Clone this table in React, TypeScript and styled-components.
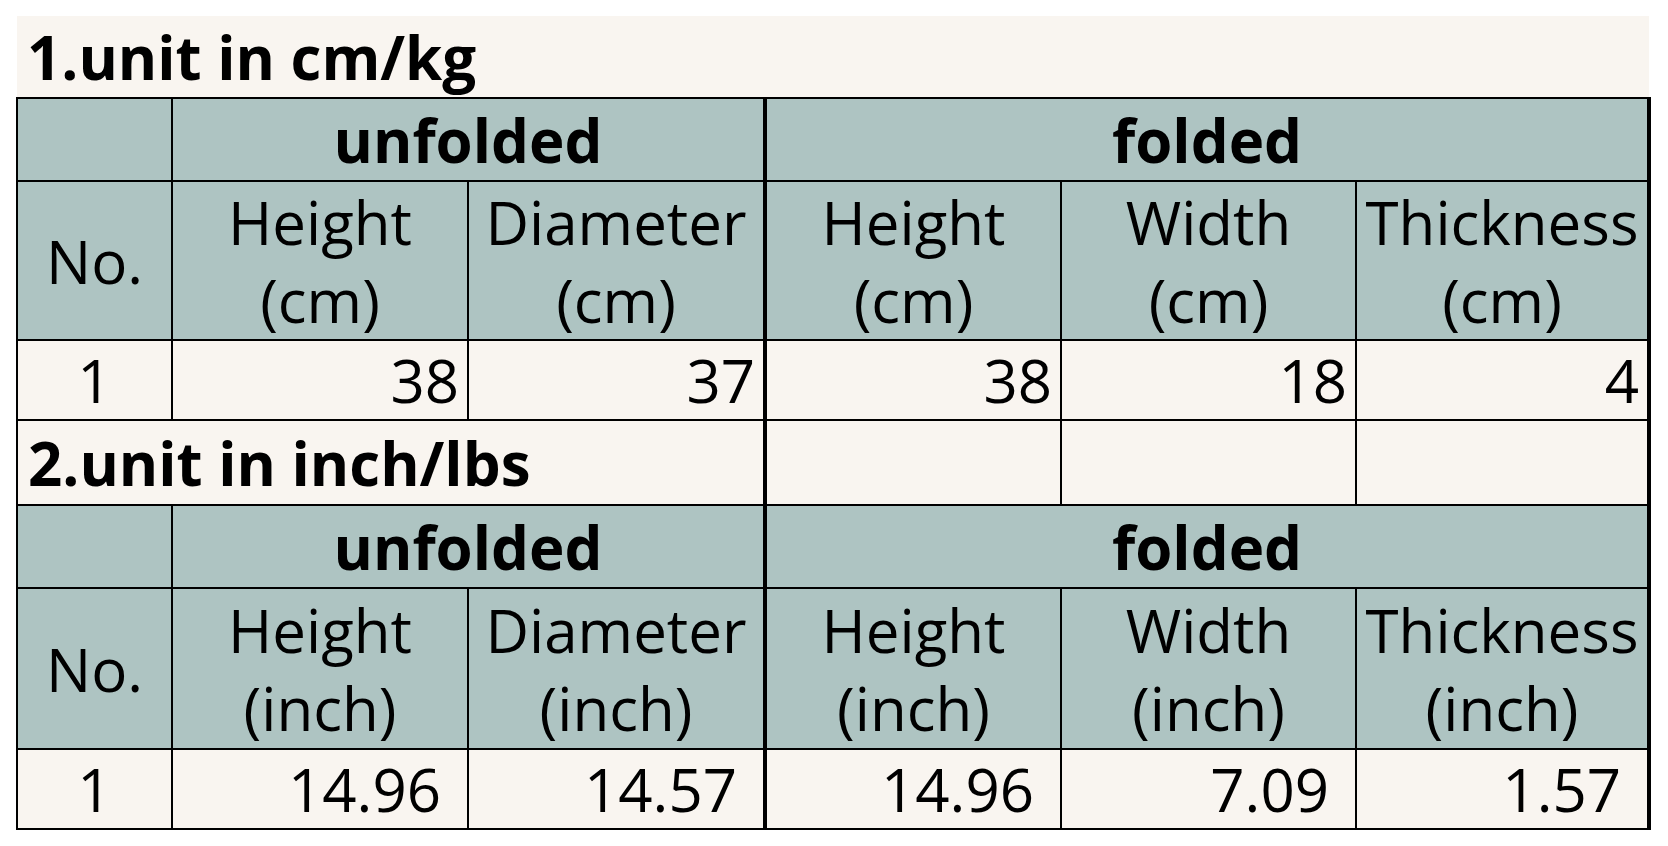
import styled, { createGlobalStyle } from "styled-components";

const GlobalStyle = createGlobalStyle`
    body {
        margin: 0;
        background: #ffffff;
    }
`;

const TEAL = "#aec4c2";
const CREAM = "#f9f5f0";

const sections = [
    {
        title: "1.unit in cm/kg",
        unit: "cm",
        values: ["38", "37", "38", "18", "4"],
        pad: 8,
        fullTitle: true,
        titleHeight: 82,
        headHeight: 159,
    },
    {
        title: "2.unit in inch/lbs",
        unit: "inch",
        values: ["14.96", "14.57", "14.96", "7.09", "1.57"],
        pad: 26,
        fullTitle: false,
        titleHeight: 85,
        headHeight: 161,
    },
];

const columns = ["Height", "Diameter", "Height", "Width", "Thickness"];

export default function App() {
    return (
        <>
            <GlobalStyle />
            <Wrapper>
                <Table>
                    <colgroup>
                        <col style={{ width: 155 }} />
                        <col style={{ width: 296 }} />
                        <col style={{ width: 297 }} />
                        <col style={{ width: 296 }} />
                        <col style={{ width: 295 }} />
                        <col style={{ width: 293 }} />
                    </colgroup>
                    {sections.map((s) => (
                        <tbody key={s.title}>
                            {/* 섹션 제목 행 */}
                            <Row $h={s.titleHeight}>
                                {s.fullTitle ? (
                                    <TitleCell colSpan={6} $plain>
                                        {s.title}
                                    </TitleCell>
                                ) : (
                                    <>
                                        <TitleCell colSpan={3}>{s.title}</TitleCell>
                                        <Cell $thick />
                                        <Cell />
                                        <Cell $last />
                                    </>
                                )}
                            </Row>

                            <Row $h={83}>
                                <HeadCell />
                                <GroupCell colSpan={2}>unfolded</GroupCell>
                                <GroupCell colSpan={3} $thick $last>
                                    folded
                                </GroupCell>
                            </Row>

                            <Row $h={s.headHeight}>
                                <HeadCell>No.</HeadCell>
                                {columns.map((c, i) => (
                                    <HeadCell key={i} $thick={i === 2} $last={i === 4} $twoLine>
                                        {c}
                                        <br />({s.unit})
                                    </HeadCell>
                                ))}
                            </Row>

                            <Row $h={80}>
                                <Cell>1</Cell>
                                {s.values.map((v, i) => (
                                    <ValueCell key={i} $pad={s.pad} $thick={i === 2} $last={i === 4}>
                                        {v}
                                    </ValueCell>
                                ))}
                            </Row>
                        </tbody>
                    ))}
                </Table>
            </Wrapper>
        </>
    );
}

const Wrapper = styled.div`
    padding: 16px 0 16px 16px;
`;

const Table = styled.table`
    border-collapse: collapse;
    table-layout: fixed;
    width: 1632px;
    font-family: "Open Sans", "Noto Sans", sans-serif;
    font-size: 60px;
    line-height: 60px;
    color: #000;
`;

const Row = styled.tr<{ $h: number }>`
    height: ${({ $h }) => $h}px;
`;

const Cell = styled.td<{ $thick?: boolean; $last?: boolean; $twoLine?: boolean }>`
    padding: 0;
    border: 2px solid #000;
    ${({ $thick }) => ($thick ? "border-left: 4px solid #000;" : "")}
    ${({ $last }) => ($last ? "border-right: 4px solid #000;" : "")}
    ${({ $twoLine }) => ($twoLine ? "line-height: 78px;" : "")}
    background: ${CREAM};
    text-align: center;
    vertical-align: middle;
    white-space: nowrap;
`;

const TitleCell = styled(Cell)<{ $plain?: boolean }>`
    font-weight: 700;
    text-align: left;
    padding-left: 10px;
    ${({ $plain }) => ($plain ? "border: none;" : "")}
`;

const HeadCell = styled(Cell)`
    background: ${TEAL};
`;

const GroupCell = styled(HeadCell)`
    font-weight: 700;
`;

const ValueCell = styled(Cell)<{ $pad: number }>`
    text-align: right;
    padding-right: ${({ $pad }) => $pad}px;
`;
